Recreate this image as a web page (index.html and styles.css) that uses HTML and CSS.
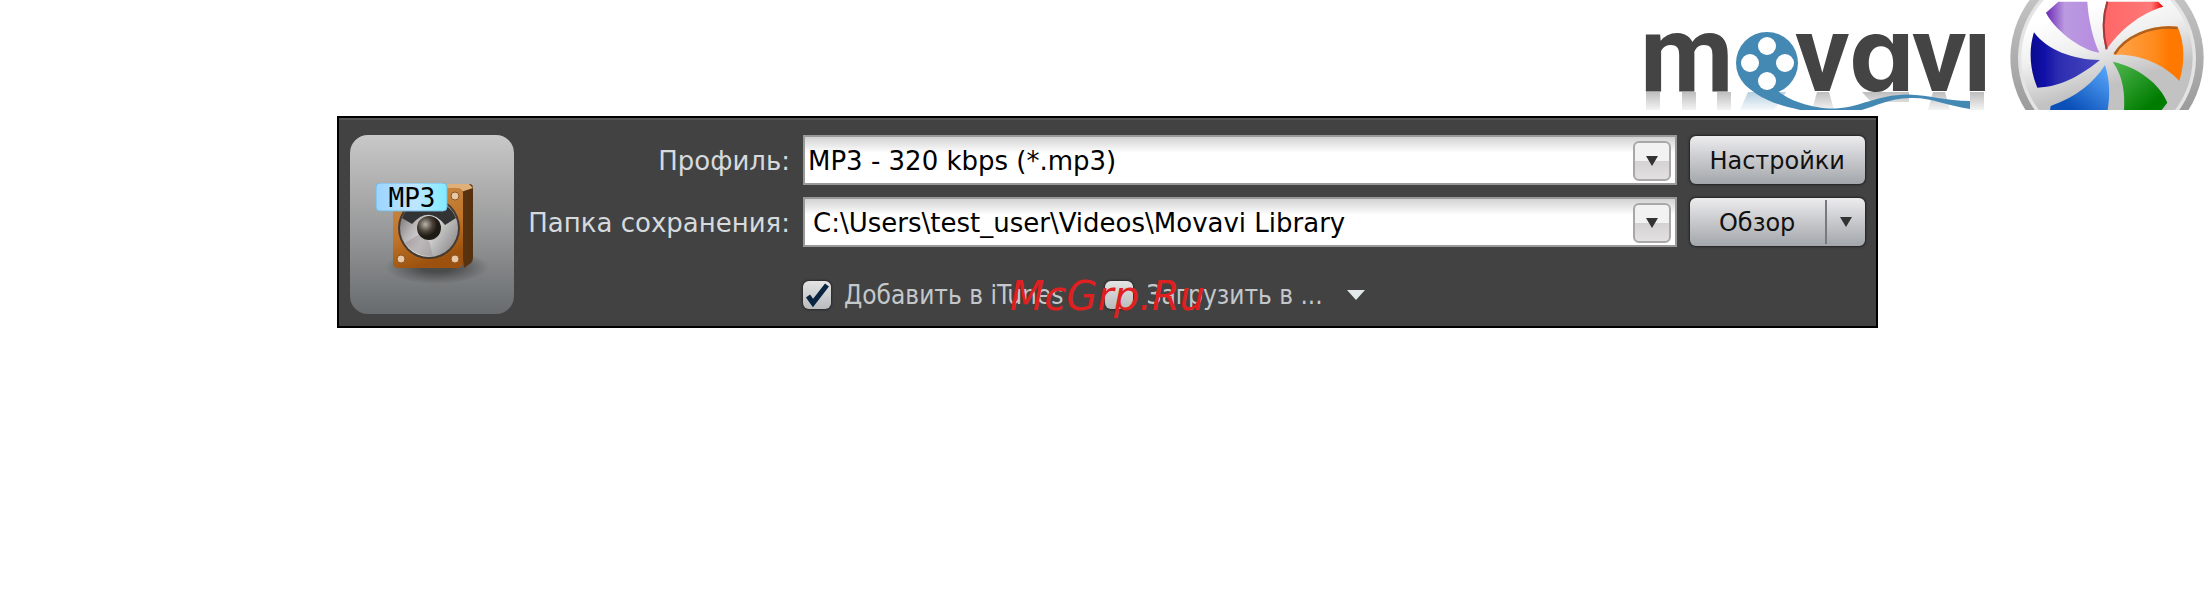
FILE: index.html
```html
<!DOCTYPE html>
<html lang="ru">
<head>
    <meta charset="UTF-8">
    <meta name="viewport" content="width=device-width, initial-scale=1.0">
    <title>Movavi</title>
    <link rel="stylesheet" href="styles.css">
</head>
<body>
    <header class="header">
        <svg class="wordmark" viewBox="1640 0 350 110" role="img" aria-label="movavi">
            <defs>
                <clipPath id="no-dot"><rect x="1640" y="31" width="350" height="79"/></clipPath>
                <linearGradient id="mirror" x1="0" y1="0" x2="0" y2="1">
                    <stop offset="0" stop-color="#444" stop-opacity="0.35"/>
                    <stop offset="1" stop-color="#444" stop-opacity="0.06"/>
                </linearGradient>
                <linearGradient id="mirror-blue" x1="0" y1="0" x2="0" y2="1">
                    <stop offset="0" stop-color="#4488b4" stop-opacity="0.4"/>
                    <stop offset="1" stop-color="#4488b4" stop-opacity="0.05"/>
                </linearGradient>
            </defs>
            <g fill="url(#mirror)">
                <path d="M1646 92h14v18h-14zM1682 92h14v18h-14zM1717 92h14v18h-14zM1970 92h14v18h-14z"/>
                <path d="M1817 92h12l5 18h-22zM1862 92h47v10h-38zM1933 92h12l5 18h-22z"/>
            </g>
            <path d="M1748 92h38l-12 18h-34z" fill="url(#mirror-blue)"/>
            <g class="wordmark-text" clip-path="url(#no-dot)">
                <text y="91" x="1640 1795 1849 1912 1963">mv<tspan class="round-a">a</tspan>vi</text>
            </g>
            <circle cx="1767" cy="63" r="31" fill="#4488b4"/>
            <path d="M1741 78C1752 98 1782 108 1818 113H1842C1870 112 1880 99 1910 98C1930 97 1945 105 1970 109V101C1945 101 1930 95 1908 94.500C1875 95 1862 107 1836 108.500C1812 109 1788 100 1778 91Z" fill="#4488b4"/>
            <g fill="#fff">
                <circle cx="1767" cy="46" r="9"/>
                <circle cx="1750" cy="63" r="9"/>
                <circle cx="1785" cy="63" r="9"/>
                <circle cx="1767" cy="81" r="9"/>
            </g>
        </svg>
        <svg class="disc" viewBox="60 0 582 330" aria-hidden="true">
            <defs>
                <linearGradient id="rim" x1="0" y1="0" x2="0" y2="1">
                    <stop offset="0" stop-color="#d0d0d0"/>
                    <stop offset="1" stop-color="#8c8c8c"/>
                </linearGradient>
                <linearGradient id="face" x1="0" y1="0" x2="0.300" y2="1">
                    <stop offset="0.300" stop-color="#fff"/>
                    <stop offset="0.500" stop-color="#f0f0f0"/>
                    <stop offset="0.750" stop-color="#c2c2c2"/>
                </linearGradient>
                <linearGradient id="purple"><stop offset="0" stop-color="#6a27b5"/><stop offset="0.350" stop-color="#bb9ae0"/><stop offset="1" stop-color="#b58be0"/></linearGradient>
                <linearGradient id="red"><stop offset="0" stop-color="#f66"/><stop offset="0.800" stop-color="#ff7878"/><stop offset="1" stop-color="#e80000"/></linearGradient>
                <linearGradient id="orange"><stop offset="0" stop-color="#ffa64d"/><stop offset="0.600" stop-color="#ff8a1c"/><stop offset="0.800" stop-color="#ff7800"/></linearGradient>
                <linearGradient id="green" x1="0" y1="0" x2="1" y2="1"><stop offset="0" stop-color="#50b850"/><stop offset="0.800" stop-color="#007c00"/></linearGradient>
                <linearGradient id="sky" x1="1" y1="0" x2="0" y2="1"><stop offset="0" stop-color="#5cacff"/><stop offset="0.800" stop-color="#0a50b8"/></linearGradient>
                <linearGradient id="navy"><stop offset="0" stop-color="#0a0a90"/><stop offset="0.200" stop-color="#1010a8"/><stop offset="0.400" stop-color="#2c2cb0"/><stop offset="1" stop-color="#4848c0"/></linearGradient>
            </defs>
            <circle cx="351" cy="174" r="290" fill="url(#rim)"/>
            <circle cx="351" cy="174" r="267" fill="#e4e4e4"/>
            <circle cx="351" cy="174" r="257" fill="url(#face)"/>
            <path d="M328 158C270 150 190 85 168 38L205 5H292C295 60 310 120 328 158Z" fill="url(#purple)"/>
            <path d="M348 150C335 100 335 50 350 5H505L520 20C450 40 390 90 348 150Z" fill="url(#red)"/>
            <path d="M350 148C338 100 338 50 352 5" fill="none" stroke="#a03a3a" stroke-width="6"/>
            <path d="M370 165C400 110 480 70 563 80C585 130 585 190 568 243C520 190 440 160 370 165Z" fill="url(#orange)"/>
            <path d="M374 162C404 112 480 75 562 84" fill="none" stroke="#b0601a" stroke-width="8"/>
            <path d="M368 185C440 200 510 250 532 308L515 330H402C405 280 400 230 368 185Z" fill="url(#green)"/>
            <path d="M345 195C360 240 360 290 353 330H180L182 318C260 290 310 250 345 195Z" fill="url(#sky)"/>
            <path d="M330 180C280 220 220 260 142 263C120 210 115 150 132 97C170 150 250 180 330 180Z" fill="url(#navy)"/>
        </svg>
    </header>

    <main class="panel">
        <button class="format" type="button" aria-label="MP3">
            <svg class="speaker" viewBox="0 0 114 110" aria-hidden="true">
                <defs>
                    <linearGradient id="wood" x1="0" y1="0" x2="0.300" y2="1">
                        <stop offset="0" stop-color="#c98d4c"/>
                        <stop offset="0.600" stop-color="#c07428"/>
                        <stop offset="1" stop-color="#9c520e"/>
                    </linearGradient>
                    <linearGradient id="side" x1="0" y1="0" x2="1" y2="0">
                        <stop offset="0" stop-color="#7d4713"/>
                        <stop offset="1" stop-color="#54300f"/>
                    </linearGradient>
                    <linearGradient id="cone" x1="0" y1="0" x2="1" y2="0.600">
                        <stop offset="0" stop-color="#555"/>
                        <stop offset="0.350" stop-color="#b4b0b2"/>
                        <stop offset="0.600" stop-color="#dedede"/>
                        <stop offset="1" stop-color="#9a9898"/>
                    </linearGradient>
                    <radialGradient id="cap" cx="0.350" cy="0.350">
                        <stop offset="0" stop-color="#b8b4ac"/>
                        <stop offset="0.600" stop-color="#4a4238"/>
                        <stop offset="1" stop-color="#1e1a14"/>
                    </radialGradient>
                    <linearGradient id="tag">
                        <stop offset="0" stop-color="#9cd4ff"/>
                        <stop offset="0.550" stop-color="#bfe6ff"/>
                        <stop offset="1" stop-color="#80ecff"/>
                    </linearGradient>
                    <radialGradient id="shade">
                        <stop offset="0.300" stop-color="#333" stop-opacity="0.7"/>
                        <stop offset="1" stop-color="#333" stop-opacity="0"/>
                    </radialGradient>
                </defs>
                <ellipse cx="62" cy="84" rx="52" ry="17" fill="url(#shade)"/>
                <path d="M28 5L34 1H94Q98 1 98 5V75Q98 78 96 80L89 85L80 8Z" fill="url(#side)"/>
                <path d="M26 6L36 1H94L98 5L86 9Z" fill="#dfb07a"/>
                <rect x="18" y="5" width="70" height="80" rx="5" fill="url(#wood)"/>
                <circle cx="54" cy="45" r="31" fill="#463a30"/>
                <circle cx="54" cy="45" r="29" fill="url(#cone)"/>
                <path d="M27 35A29 29 0 0 1 81 35L70 42Q54 22 37 41Z" fill="#333"/>
                <path d="M30 60Q40 74 58 73L54 58L43 52Z" fill="#9a9094" opacity="0.5"/>
                <circle cx="54" cy="45" r="12" fill="url(#cap)"/>
                <g fill="#e9c8a6" stroke="#8b5726">
                    <circle cx="80" cy="13" r="4"/>
                    <circle cx="26" cy="76" r="4"/>
                    <circle cx="80" cy="76" r="4"/>
                </g>
                <rect x="1" y="0" width="71" height="28" rx="4" fill="url(#tag)" stroke="#76b8e0"/>
                <text class="tag-text" x="37" y="24" text-anchor="middle">MP3</text>
            </svg>
        </button>

        <form class="settings">
            <label class="label" for="profile">Профиль:</label>
            <div class="field">
                <select id="profile" class="profile">
                    <option>MP3 - 320 kbps (*.mp3)</option>
                </select>
                <span class="drop"></span>
            </div>
            <button class="btn" type="button">Настройки</button>

            <label class="label" for="folder">Папка сохранения:</label>
            <div class="field">
                <select id="folder" class="folder">
                    <option>C:\Users\test_user\Videos\Movavi Library</option>
                </select>
                <span class="drop"></span>
            </div>
            <div class="split">
                <button class="split-main" type="button">Обзор</button>
                <button class="split-more" type="button" aria-label="Ещё"></button>
            </div>

            <div class="options">
                <label class="check"><input type="checkbox" checked><span>Добавить в iTunes</span></label>
                <label class="check"><input type="checkbox"><span>Загрузить в ...</span></label>
                <button class="upload-more" type="button" aria-label="Куда загрузить"></button>
            </div>
        </form>
        <div class="watermark">McGrp.Ru</div>
    </main>
</body>
</html>
```
FILE: styles.css
```css
:root {
    --panel-color: #424242;
    --label-color: #d6dadd;
    --arrow-color: #333;
}

* {
    box-sizing: border-box;
    margin: 0;
    padding: 0;
}

body {
    font-family: 'DejaVu Sans', Verdana, sans-serif;
    font-size: 26px;
    background: #fff;
}

button,
select {
    font: inherit;
    color: #111;
    cursor: pointer;
}

.header {
    display: flex;
    justify-content: flex-end;
    gap: 20px;
    padding-right: 5px;
}

.wordmark {
    width: 350px;
    height: 110px;
}

.wordmark-text {
    font-family: Roboto, sans-serif;
    font-size: 108px;
    font-weight: 700;
    fill: #444;
}

.round-a {
    font-family: Inter, sans-serif;
    font-size: 104px;
    font-feature-settings: 'cv11';
}

.disc {
    width: 194px;
    height: 110px;
}

.panel {
    position: relative;
    display: flex;
    gap: 12px;
    margin: 6px 15% 0 337px;
    padding: 17px 11px 12px;
    border: 2px solid #000;
    background: var(--panel-color);
    box-shadow: inset 0 2px 0 #555;
}

.format {
    display: flex;
    align-items: center;
    justify-content: center;
    width: 164px;
    height: 179px;
    border: none;
    border-radius: 18px;
    background: linear-gradient(#c8c8c8, #9b9c9d 50%, #676b6d);
}

.speaker {
    width: 114px;
    height: 110px;
    margin-top: 26px;
}

.tag-text {
    font-family: 'DejaVu Sans Mono', monospace;
    font-size: 26px;
    fill: #000;
}

.settings {
    flex: 1;
    display: grid;
    grid-template-columns: 264px 1fr 175px;
    grid-template-rows: 50px 50px auto;
    gap: 12px 13px;
}

.label {
    align-self: center;
    padding-top: 2px;
    text-align: right;
    white-space: nowrap;
    color: var(--label-color);
}

.field {
    position: relative;
}

.field select {
    appearance: none;
    width: 100%;
    height: 100%;
    padding-top: 2px;
    border: 2px solid #999;
    border-radius: 0;
    background: linear-gradient(#d2d2d2, #fff 16px);
    color: #000;
}

.field .profile {
    padding-left: 3px;
}

.field .folder {
    padding-left: 8px;
}

/* arrow box lying over the right end of the field */
.drop {
    position: absolute;
    top: 6px;
    right: 6px;
    display: flex;
    align-items: center;
    justify-content: center;
    width: 38px;
    height: 40px;
    border: 2px solid #a9a7a8;
    border-radius: 6px;
    background: linear-gradient(#f2f2f2 50%, #d4d2d3 50%, #e2e0e0);
    pointer-events: none;
}

.drop::after,
.split-more::after {
    content: '';
    border: 6px solid transparent;
    border-top: 10px solid var(--arrow-color);
    border-bottom: none;
}

.btn,
.split {
    height: 48px;
    align-self: center;
    border: none;
    border-radius: 6px;
    background: linear-gradient(#ececee, #cbccd0 45%, #a2a6aa);
    box-shadow: 0 0 2px 1px #222;
    font-size: 24px;
}

.btn {
    padding-top: 2px;
}

.split {
    display: flex;
    align-items: center;
}

.split button {
    border: none;
    background: none;
}

.split .split-main {
    flex: 1;
    height: 100%;
    padding-top: 2px;
}

.split .split-more {
    display: flex;
    align-items: center;
    justify-content: center;
    width: 40px;
    height: 44px;
    border-left: 2px solid #77797c;
}

.options {
    grid-column: 2 / 4;
    display: flex;
    align-items: center;
    padding-top: 16px;
    font-family: 'DejaVu Sans Condensed', Tahoma, sans-serif;
    color: #c4c8cb;
}

.check {
    display: flex;
    align-items: center;
    gap: 13px;
    margin-right: 42px;
    white-space: nowrap;
}

.check input {
    appearance: none;
    width: 28px;
    height: 28px;
    border-radius: 6px;
    background: linear-gradient(#e4e4e4, #b9bbbc);
    box-shadow: 0 0 2px 1px #2c2c2c;
}

.check input:checked {
    background: url("data:image/svg+xml,%3Csvg xmlns='http://www.w3.org/2000/svg' viewBox='0 0 28 28'%3E%3Cpath d='M5 15L10 22L24 4' fill='none' stroke='%23082440' stroke-width='5'/%3E%3C/svg%3E"), linear-gradient(#e4e4e4, #b9bbbc);
}

.check:last-of-type {
    margin-right: 24px;
}

.upload-more {
    width: 18px;
    border: 9px solid transparent;
    border-top: 10px solid #e2eaec;
    border-bottom: none;
    background: none;
}

.watermark {
    position: absolute;
    top: 156px;
    left: 50%;
    transform: translateX(-50%);
    font-size: 40px;
    font-style: italic;
    line-height: 44px;
    color: #e02020;
    pointer-events: none;
}
```
